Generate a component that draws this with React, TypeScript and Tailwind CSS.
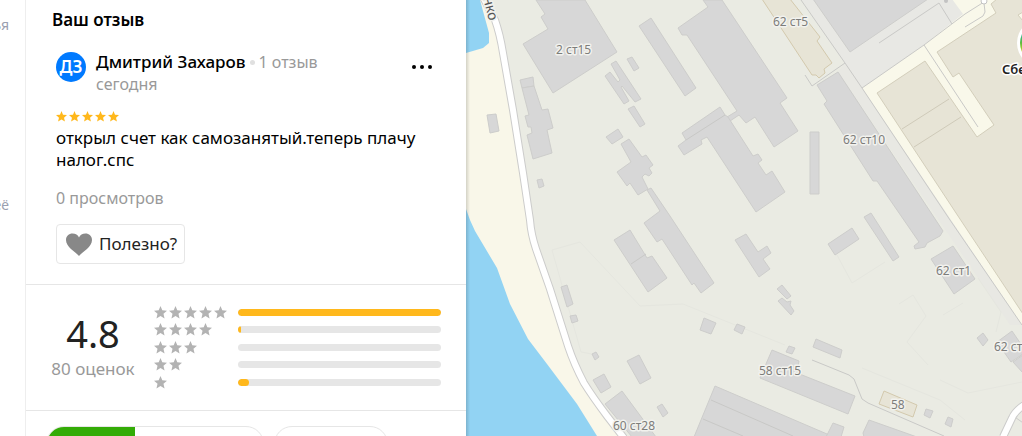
import React from 'react';
import { clsx } from 'clsx';

const BUILDINGS = [
  '536,0 545,14 541,17 548,29 523,44 553,93 617,52 585,0',
  '520,80 533,77 534,86 522,88',
  '522,88 534,86 542,110 548,109 553,128 547,130 552,153 533,159 527,135 532,133 531,127 528,127 525,116 529,115',
  '487,115 496,114 499,131 490,133',
  '537,180 542,179 544,186 539,188',
  '627,59 632,57 639,68 634,71',
  '611,64 616,61 641,99 635,102 622,86 621,87 629,101 624,104 605,76 610,72 618,82 620,80',
  '628,109 634,106 645,124 640,127',
  '606,137 618,129 623,137 612,144',
  '621,144 629,139 642,157 646,155 653,165 649,168 652,173 649,176 645,174 642,177 648,189 638,195 630,183 627,186 617,172 631,162',
  '647,190 651,188 670,216 714,283 701,293 694,283 692,285 662,239 657,242 644,223 660,211',
  '639,26 651,18 696,88 685,96',
  '703,0 708,7 678,28 682,35 687,35 737,111 727,117 730,121 739,115 746,123 755,117 774,147 798,131 780,103 787,98 722,0',
  '682,133 720,107 725,115 728,117 753,156 758,154 762,160 758,163 766,175 772,171 785,192 756,212 707,137 701,140 702,144 684,155 678,146 686,140',
  '813,-1 850,52 928,-1',
  '817,85 838,72 943,231 940,236 927,243 925,247 915,249 914,246 919,242 877,181 873,181 824,104 827,101',
  '810,132 819,132 819,194 810,194',
  '864,217 871,213 899,257 893,261',
  '561,287 567,285 573,304 567,307',
  '570,316 576,315 578,321 572,323',
  '592,354 596,352 599,357 595,360',
  '593,380 604,374 611,387 601,393',
  '627,361 639,355 651,378 640,384',
  '605,404 622,391 656,437 632,437',
  '657,407 662,404 668,413 663,417',
  '614,240 630,230 647,258 652,256 667,278 648,292',
  '735,240 746,234 758,252 767,246 771,253 763,259 770,269 759,277',
  '777,289 782,285 791,296 787,299',
  '778,301 782,298 787,302 791,301 790,305 794,311 791,315',
  '700,330 704,318 716,323 711,334',
  '734,330 737,324 745,327 742,334',
  '786,352 789,346 795,348 792,354',
  '760,378 772,350 799,361 797,373 855,396 848,414',
  '813,347 816,339 842,350 840,358',
  '715,386 694,437 834,437',
  '826,437 833,423 844,427 841,437',
  '863,433 869,420 917,437 864,437',
  '828,244 852,228 859,239 835,255',
  '931,259 953,246 975,279 954,294',
  '977,338 983,333 988,340 983,346',
  '997,342 1012,331 1023,347 1023,354 1011,362',
  '1013,362 1023,355 1023,373',
  '924,415 926,409 933,411 930,418',
  '945,424 948,417 953,419 951,427',
];

const ROOF_LINES = ['631,264 646,254', '686,140 725,115', '711,400 793,436', '703,419 743,436'];

const FENCES = [
  '801,0 845,63 862,88 950,220 1022,325',
  '805,75 812,86 845,63',
  '862,88 924,45 965,14 984,2',
  '879,43 939,3 952,24',
  '965,27 983,16 985,12 984,3',
  '924,45 978,127',
  '812,360 822,364 849,375 854,379 862,399 868,403 944,436',
];

const FOOTPATHS = [
  '552,250 580,242 640,306 683,304 785,345',
  '552,250 581,352 592,354',
  '837,255 852,283 885,262',
  '899,304 913,295 926,316 907,342 928,365',
  '862,368 940,400 965,420',
  '940,380 968,393 1022,382',
  '943,315 963,303',
  '978,278 1001,312 996,332',
];

const LABELS = [
  { text: '2 ст15', x: 556, y: 54 },
  { text: '62 ст5', x: 773, y: 26 },
  { text: '62 ст10', x: 843, y: 144 },
  { text: '62 ст1', x: 936, y: 275 },
  { text: '62 ст', x: 994, y: 351 },
  { text: '58 ст15', x: 759, y: 375 },
  { text: '60 ст28', x: 613, y: 430 },
  { text: '58', x: 891, y: 409 },
];

const RATINGS = [
  { stars: 5, percent: 100 },
  { stars: 4, percent: 1.5 },
  { stars: 3, percent: 0 },
  { stars: 2, percent: 0 },
  { stars: 1, percent: 5.5 },
];

const EMBANKMENT = 'M474,-20 L495,20 Q500,34 503,53 L513,110 L523,173 L530,220 Q531,234 536,249 L550,289 L568,346 Q574,364 584,383 Q592,396 607,416 L624,438';

function Star({ className }: { className: string }) {
  return (
    <svg viewBox="0 0 24 24" className={className} fill="currentColor" aria-hidden="true">
      <path d="M12 0 15.300 8 24 8.800 17.500 14.500 19.500 23 12 18.500 4.500 23 6.500 14.500 0 8.800 8.700 8Z" />
    </svg>
  );
}

function CityMap() {
  return (
    <svg
      viewBox="466 0 556 436"
      preserveAspectRatio="xMinYMin slice"
      className="block w-full h-full font-['Noto_Sans',sans-serif]"
      role="img"
      aria-label="Карта"
    >
      <defs>
        <linearGradient id="pin" x1="0" y1="0" x2="0" y2="1">
          <stop offset="0.200" stopColor="#1fb5c4" />
          <stop offset="0.500" stopColor="#5dbb3c" />
          <stop offset="0.800" stopColor="#f5e52a" />
        </linearGradient>
      </defs>
      <rect x="466" width="556" height="436" fill="#eaebe3" />

      {/* shore and water */}
      <path d={`${EMBANKMENT} L466,438 L466,-20Z`} fill="#f9f7e9" />
      <path d="M466,0H480L489,33V43L483,48L466,53Z" fill="#92d3f3" />
      <path d="M466,209L470,220L475,231L497,268L510,304L528,339L547,364L577,404L597,436H466Z" fill="#92d3f3" />

      {/* streets and parking */}
      <polygon points="801,-1 955,-1 965,14 924,45 862,88" fill="#e8e8e4" />
      <polygon points="845,63 862,88 1022,325 1010,325 838,72" fill="#e8e8e3" />
      <polygon points="862,88 924,45 963,14 952,-1 1022,-1 1022,325" fill="#f9f8ea" />
      <polygon
        points="877,93 925,61 977,137 994,125 959,73 953,77 937,52 996,13 991,4 997,-1 1023,-1 1023,314 958,216"
        fill="#e7e4d6"
        stroke="#d3cebb"
      />
      <path d="M902,129L949,99M914,147L961,117" stroke="#cfcab9" fill="none" />
      <polygon points="1018,15 1023,12 1023,21" fill="#f9f8ea" stroke="#d3cebb" />

      {FOOTPATHS.map(p => (
        <polyline key={p} points={p} fill="none" stroke="#e5e6df" />
      ))}
      {BUILDINGS.map(p => (
        <polygon key={p} points={p} fill="#d7d7d7" stroke="#cdcdcb" strokeLinejoin="round" />
      ))}
      {ROOF_LINES.map(p => (
        <polyline key={p} points={p} fill="none" stroke="#c8c8c6" />
      ))}
      <polygon
        points="762,-1 790,-1 820,37 817,41 832,63 824,69 825,73 819,78 816,75 812,75"
        fill="#e7e4d6"
        stroke="#d3c9ad"
      />
      <polygon points="879,404 884,391 917,405 913,417" fill="#e7e4d6" stroke="#d3c9ad" />
      {FENCES.map(p => (
        <polyline key={p} points={p} fill="none" stroke="#c9c9c7" />
      ))}
      <circle cx="946" cy="1" r="2" fill="#c3c3c3" />
      <circle cx="984" cy="1" r="3" fill="#fff" stroke="#c3c3c3" />

      {/* roads */}
      <path d={EMBANKMENT} fill="none" stroke="#cccccb" strokeWidth="8" />
      <path d={EMBANKMENT} fill="none" stroke="#fff" strokeWidth="6" />
      <path d="M1012,415L1026,425" stroke="#cccccb" />
      <path d="M1003,437L1012,418Q1015,411 1024,405" fill="none" stroke="#cccccb" strokeWidth="8" />
      <path d="M1003,437L1012,418Q1015,411 1024,405" fill="none" stroke="#fff" strokeWidth="6" />

      {/* labels */}
      <g fontSize="12" fill="#7d7d7b" stroke="#f2f2ee" strokeWidth="3" strokeLinejoin="round" paintOrder="stroke">
        {LABELS.map(l => (
          <text key={`${l.text}-${l.x}`} x={l.x} y={l.y}>{l.text}</text>
        ))}
        <text x="483" y="-2" fontSize="14" fill="#555" transform="rotate(75 483 -2)">нко</text>
        <text x="1002" y="74" fontSize="13" fontWeight="600" fill="#222" stroke="#fff">Сбе</text>
      </g>
      <circle cx="1041" cy="43" r="24" fill="#fff" />
      <circle cx="1041" cy="43" r="21" fill="url(#pin)" />
    </svg>
  );
}

function Review() {
  return (
    <section className="px-[26px] pt-2 pb-5 border-b border-[#e6e6e6]">
      <h2 className="text-[17px] leading-6 font-semibold">Ваш отзыв</h2>
      <article className="mt-[18px] px-1">
        <header className="flex items-start gap-[10px]">
          <div className="flex items-center justify-center w-[30px] h-[30px] mt-0.5 rounded-full bg-[#007aff] text-white text-[17px] font-semibold">
            ДЗ
          </div>
          <div className="flex-1">
            <div className="flex items-center gap-1 text-[17px] leading-6">
              <span className="font-medium">Дмитрий Захаров</span>
              <span className="w-[5px] h-[5px] rounded-full bg-[#e0e0e0]" />
              <span className="text-base leading-6 text-[#999]">1 отзыв</span>
            </div>
            <div className="text-base leading-5 text-[#999]">сегодня</div>
          </div>
          <button type="button" aria-label="Меню" className="flex items-center gap-1 h-[34px] mr-1">
            {[0, 1, 2].map(i => (
              <span key={i} className="w-1 h-1 rounded-full bg-black" />
            ))}
          </button>
        </header>
        <div className="flex gap-[2px] mt-[17px] text-[#ffb81c]">
          {[1, 2, 3, 4, 5].map(i => (
            <Star key={i} className="w-[11px] h-[11px]" />
          ))}
        </div>
        <p className="mt-[5px] text-[17px] leading-[22px]">открыл счет как самозанятый.теперь плачу налог.спс</p>
        <div className="mt-[15px] text-base leading-6 text-[#999]">0 просмотров</div>
        <button
          type="button"
          className="flex items-center gap-[7px] h-10 mt-[14px] pr-[7px] pl-[9px] rounded border border-[#e6e6e6] text-[17px] text-[#222]"
        >
          <svg viewBox="0 0 26 23" className="w-[26px] h-[23px]" fill="#888" aria-hidden="true">
            <path d="M13 23C9 18.500 0 14 0 7C0 3 3 0.500 6.500 0.500C9.500 0.500 12 2 13 4.500C14 2 16.500 0.500 19.500 0.500C23 0.500 26 3 26 7C26 14 17 18.500 13 23Z" />
          </svg>
          Полезно?
        </button>
      </article>
    </section>
  );
}

function RatingSummary() {
  return (
    <section className="flex items-center px-[25px] pt-[18px] pb-[19px] border-b border-[#e6e6e6]">
      <div className="w-[84px] text-center">
        <div className="text-[38px] leading-10 text-[#222]">4.8</div>
        <div className="mt-1 text-[17px] leading-6 text-[#999] whitespace-nowrap">80 оценок</div>
      </div>
      <div className="flex-1 ml-[19px]">
        {RATINGS.map((r, i) => (
          <div key={r.stars} className={clsx('flex items-center', i % 2 ? 'h-[17px]' : 'h-[18px]')}>
            <div className="flex gap-[2px] w-[84px] text-[#b3b3b3]">
              {Array.from({ length: r.stars }, (_, n) => (
                <Star key={n} className="w-[13px] h-[13px]" />
              ))}
            </div>
            <div className="flex-1 h-[7px] rounded bg-[#e6e6e6] overflow-hidden">
              <div className="h-full rounded bg-[#ffb81c]" style={{ width: `${r.percent}%` }} />
            </div>
          </div>
        ))}
      </div>
    </section>
  );
}

export default function App() {
  return (
    <div className="flex h-screen overflow-hidden bg-white text-black font-['Noto_Sans','Open_Sans',sans-serif]">
      {/* neighbouring column */}
      <aside className="flex flex-col items-end w-[26px] shrink-0 pt-[15px] pr-4 border-r border-[#eee] overflow-hidden text-sm leading-5 text-[#9a9fb0]">
        <span>ья</span>
        <span className="mt-40">её</span>
      </aside>

      <main className="w-[440px] shrink-0 overflow-hidden">
        <Review />
        <RatingSummary />
        <div className="flex gap-[10px] px-5 pt-[15px]">
          <div className="flex w-[218px] h-9 rounded-full border border-[#e6e6e6] overflow-hidden">
            <button type="button" aria-label="Оценить" className="w-[89px] -my-px -ml-px bg-[#33ab06]" />
            <button type="button" aria-label="Отзыв" className="flex-1" />
          </div>
          <button type="button" aria-label="Ещё" className="w-[114px] h-9 rounded-full border border-[#e6e6e6]" />
        </div>
      </main>

      <div className="relative flex-1 min-w-0">
        <CityMap />
        <div className="absolute inset-y-0 left-0 w-1 bg-linear-to-r from-black/15 to-transparent" />
      </div>
    </div>
  );
}
